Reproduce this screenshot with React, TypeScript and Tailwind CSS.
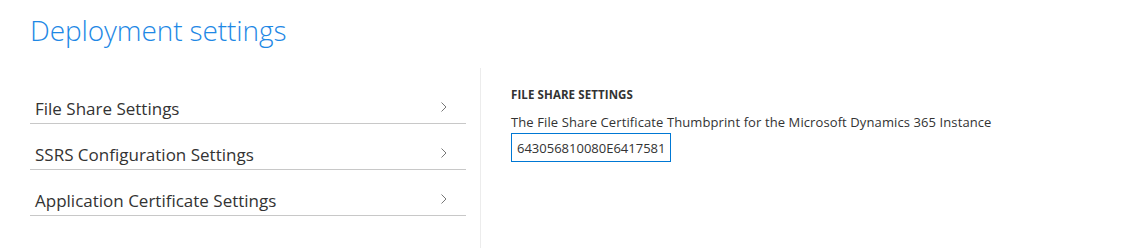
import React from "react";

const items = [
  "File Share Settings",
  "SSRS Configuration Settings",
  "Application Certificate Settings",
];

const Chevron: React.FC = () => (
  <svg width="6" height="10" viewBox="0 0 6 10" fill="none" className="text-[#777] mb-[8px]">
    <path d="M0.5 0.5 L5 5 L0.5 9.5" stroke="currentColor" strokeWidth="1" />
  </svg>
);

const App: React.FC = () => {
  return (
    <div className="w-[1131px] h-[248px] bg-white overflow-hidden font-['Open_Sans',sans-serif]">
      {/* header */}
      <h1 className="pl-[30px] pt-[11px] h-[68px] text-[28px] font-light text-[#1e88e5] tracking-[-0.1px] leading-[38px]">
        Deployment settings
      </h1>

      <div className="flex h-[180px]">
        {/* left list */}
        <div className="w-[480px] pl-[30px] pr-[14px] pt-[10px]">
          {items.map((label) => (
            <div
              key={label}
              className="flex items-end justify-between h-[46px] pl-[5px] pr-[19px] pb-[3px] border-b border-[#c8c8c8] text-[17px] leading-[23px] text-[#333]"
            >
              <span>{label}</span>
              <Chevron />
            </div>
          ))}
        </div>

        {/* right panel */}
        <div className="flex-1 border-l border-[#ececec] pl-[30px] pt-[19px]">
          <div className="text-[11.5px] font-bold text-[#333] tracking-[0.1px] leading-[16px]">
            FILE SHARE SETTINGS
          </div>
          <div className="mt-[11px] text-[13px] text-[#333] tracking-[0.1px] leading-[17px]">
            The File Share Certificate Thumbprint for the Microsoft Dynamics 365 Instance
          </div>
          <input
            type="text"
            readOnly
            value="643056810080E6417581A9B2"
            className="mt-[2px] w-[160px] h-[29px] px-[5px] border border-[#0078d4] text-[13px] text-[#333] outline-none"
          />
        </div>
      </div>
    </div>
  );
};

export default App;
